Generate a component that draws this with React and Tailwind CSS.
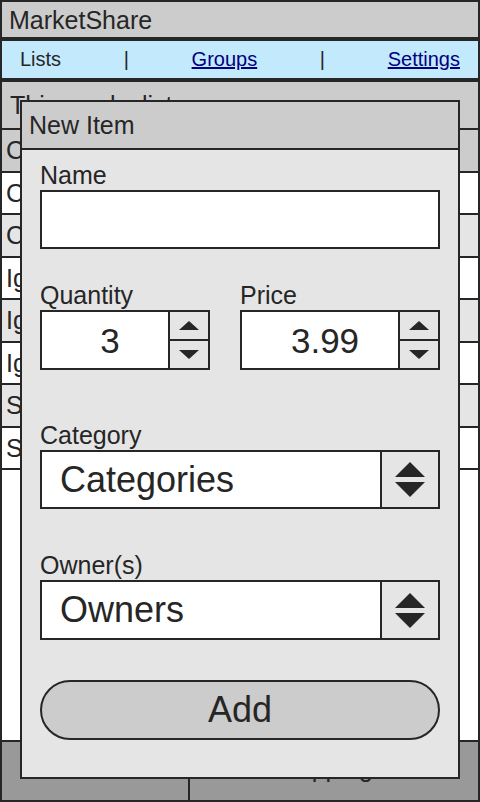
import React from 'react';

const rows = [
  { name: 'Creator', tone: 'bg-[#cccccc]' },
  { name: 'Chris', tone: 'bg-white' },
  { name: 'Chris', tone: 'bg-[#e5e5e5]' },
  { name: 'Igor', tone: 'bg-white' },
  { name: 'Igor', tone: 'bg-[#e5e5e5]' },
  { name: 'Igor', tone: 'bg-white' },
  { name: 'Sam', tone: 'bg-[#e5e5e5]' },
  { name: 'Sam', tone: 'bg-white' },
];

function Triangle({ down, w = 20, h = 9 }) {
  return (
    <svg width={w} height={h} viewBox={`0 0 ${w} ${h}`}>
      <path d={down ? `M0 0 L${w} 0 L${w / 2} ${h} Z` : `M${w / 2} 0 L${w} ${h} L0 ${h} Z`} fill="#262626" />
    </svg>
  );
}

function Spinner({ value }) {
  return (
    <div className="flex h-[60px] border-2 border-[#262626] bg-white">
      <div className="flex flex-1 items-center justify-center pl-[10px] text-[35px] leading-none">{value}</div>
      <div className="flex w-[40px] flex-col border-l-2 border-[#262626] bg-[#e5e5e5]">
        <div className="flex flex-1 items-center justify-center border-b-2 border-[#262626]">
          <Triangle />
        </div>
        <div className="flex flex-1 items-center justify-center">
          <Triangle down />
        </div>
      </div>
    </div>
  );
}

function Select({ value, height = 'h-[60px]' }) {
  return (
    <div className={`flex ${height} border-2 border-[#262626] bg-white`}>
      <div className="flex flex-1 items-center pl-[18px] text-[36px] leading-none">{value}</div>
      <div className="flex w-[58px] items-center justify-center border-l-2 border-[#262626] bg-[#e5e5e5]">
        <svg width="30" height="35" viewBox="0 0 30 35">
          <path d="M15 0 L30 15 L0 15 Z" fill="#262626" />
          <path d="M0 20 L30 20 L15 35 Z" fill="#262626" />
        </svg>
      </div>
    </div>
  );
}

function Label({ children, className = '' }) {
  return <div className={`mb-[1px] text-[25px] leading-[28px] ${className}`}>{children}</div>;
}

function NewItemDialog() {
  return (
    <div className="absolute left-[20px] top-[100px] flex h-[679px] w-[440px] flex-col border-2 border-[#262626] bg-[#e5e5e5]">
      <div className="h-[48px] border-b-2 border-[#262626] bg-[#cccccc] pl-[7px] text-[25px] leading-[46px]">New Item</div>
      <div className="px-[18px] pt-[11px]">
        <Label>Name</Label>
        <div className="h-[59px] border-2 border-[#262626] bg-white" />

        <div className="mt-[32px] flex gap-[30px]">
          <div className="w-[170px]">
            <Label>Quantity</Label>
            <Spinner value="3" />
          </div>
          <div className="flex-1">
            <Label>Price</Label>
            <Spinner value="3.99" />
          </div>
        </div>

        <Label className="mt-[51px]">Category</Label>
        <Select value="Categories" height="h-[59px]" />

        <Label className="mt-[42px]">Owner(s)</Label>
        <Select value="Owners" />

        <button className="mt-[40px] flex h-[60px] w-full items-center justify-center rounded-full border-2 border-[#262626] bg-[#cccccc] text-[36px] leading-none text-[#262626]">
          Add
        </button>
      </div>
    </div>
  );
}

export default function App() {
  return (
    <div className="relative h-[802px] w-[480px] overflow-hidden bg-white font-['Liberation_Sans',Arial,sans-serif] text-[#262626]">
      <div className="flex h-full flex-col border-2 border-[#262626]">
        <header className="h-[37px] border-b-2 border-[#262626] bg-[#cccccc] pl-[7px] text-[25px] leading-[37px]">
          MarketShare
        </header>
        <nav className="flex h-[41px] items-center justify-between border-y-2 border-[#262626] bg-[#c3e9fc] px-[18px] text-[20px] leading-[37px]">
          <span>Lists</span>
          <span>|</span>
          <a href="#" className="text-[#000080] underline">Groups</a>
          <span>|</span>
          <a href="#" className="text-[#000080] underline">Settings</a>
        </nav>
        <div className="h-[50px] border-y-2 border-[#262626] bg-[#cccccc] pl-[8px] text-[25px] leading-[46px]">
          This weeks list
        </div>
        <div>
          {rows.map((row, i) => (
            <div
              key={i}
              className={`flex h-[42.5px] items-center border-b-2 border-[#262626] pl-[4px] text-[25px] leading-[28px] ${row.tone}`}
            >
              {row.name}
            </div>
          ))}
        </div>
        <div className="flex-1" />
        <div className="flex h-[60px] border-t-2 border-[#262626] bg-[#999999] text-[25px] leading-[53px]">
          <div className="w-[188px] border-r-2 border-[#262626] text-center">List</div>
          <div className="flex-1 pr-[28px] text-center">Shopping</div>
        </div>
      </div>
      <NewItemDialog />
    </div>
  );
}
